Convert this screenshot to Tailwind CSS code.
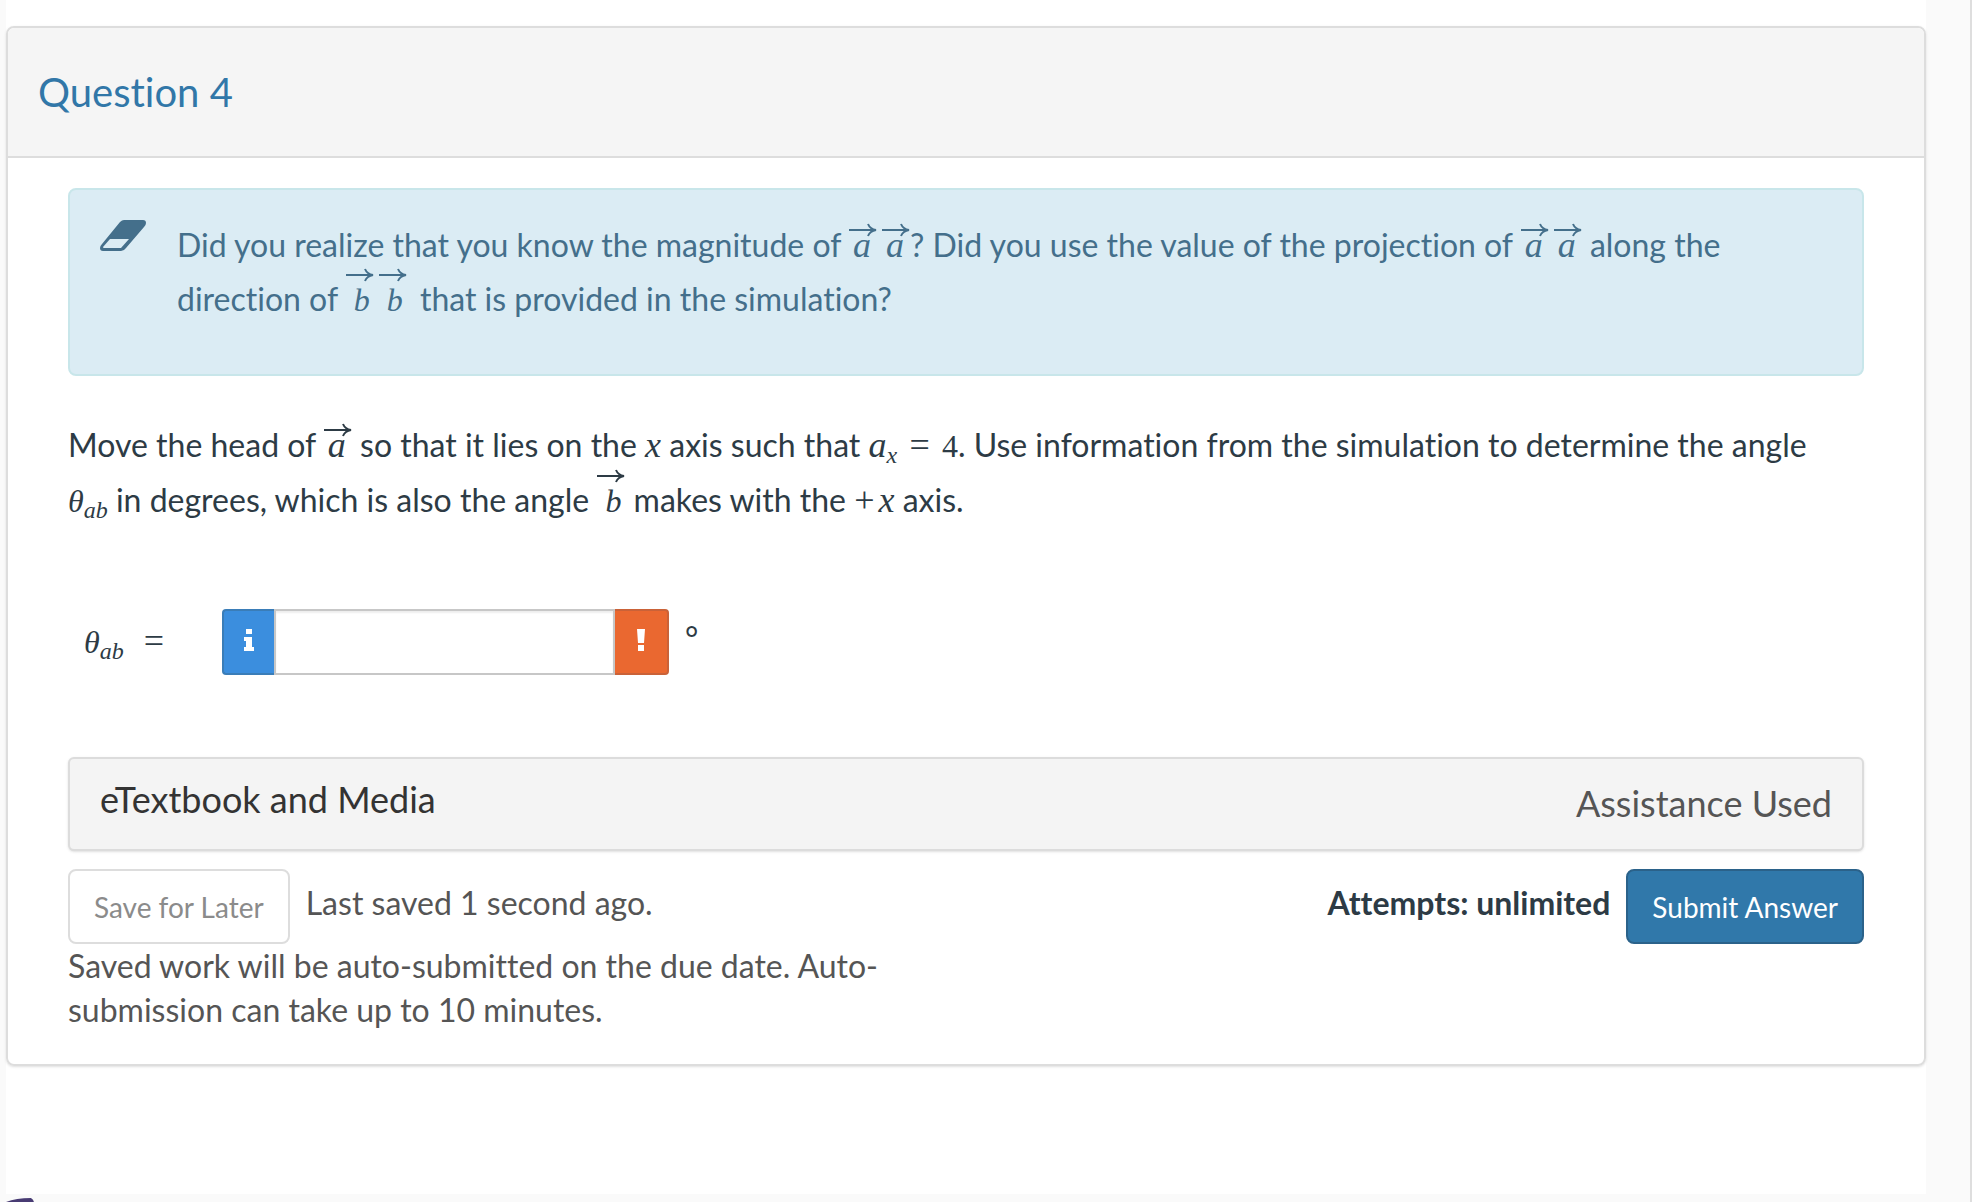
<!DOCTYPE html>
<html lang="en">
<head>
  <meta charset="UTF-8">
  <title>Question 4</title>
  <script src="https://cdn.jsdelivr.net/npm/@tailwindcss/browser@4"></script>
</head>
<body class="bg-[#fafafa] font-['Lato',sans-serif] text-[32px] text-[#2d3b45] [font-variant-ligatures:none]">
  <!-- arrow drawn over vector names -->
  <svg class="hidden">
    <symbol id="arrow" viewBox="0 0 28 14">
      <path d="M0 7H26M19 1Q21 6 27 7Q21 8 19 13" fill="none" stroke="currentColor" stroke-width="2"/>
    </symbol>
  </svg>

  <div class="flex flex-col min-h-screen pl-1.5 pr-11 border-r-2 border-[#dedede]">
    <main class="flex-1 bg-white pt-[26px]">
      <section class="border-2 border-[#dddddd] rounded-lg shadow-sm">
        <header class="flex items-center h-[130px] px-[30px] bg-[#f5f5f5] border-b-2 border-[#dddddd] rounded-t-md">
          <h1 class="text-[40px] leading-[44px] text-[#3177a8]">Question 4</h1>
        </header>

        <div class="px-[60px] pt-[30px] pb-8">
          <div class="flex items-start h-[188px] pl-[29px] pr-[120px] pt-[28px] bg-[#dbecf4] border-2 border-[#c8e6ea] rounded-lg text-[#446f8b]">
            <svg class="w-[48px] h-[34px] shrink-0 mr-[30px]" viewBox="0 0 48 34">
              <path fill="currentColor" fill-rule="evenodd" d="M25 2H44Q47 2 47 5Q47 7 45 9L27 30Q25 33 22 33H4Q1 33 1 30Q1 28 3 26L21 4Q23 2 25 2ZM11 21L4 29Q4 30 5 30H22L30 21Z"/>
            </svg>
            <p class="leading-[54px]">Did you realize that you know the magnitude of
              <span class="font-['Liberation_Serif',serif] italic text-4xl leading-none whitespace-nowrap"><span class="relative inline-block w-[33px] pl-1">a<svg class="absolute left-0 -top-1 w-7 h-3.5"><use href="#arrow"/></svg></span><span class="relative inline-block w-7 pl-1">a<svg class="absolute left-0 -top-1 w-7 h-3.5"><use href="#arrow"/></svg></span></span>? Did you use the value of the projection of
              <span class="font-['Liberation_Serif',serif] italic text-4xl leading-none whitespace-nowrap"><span class="relative inline-block w-[33px] pl-1">a<svg class="absolute left-0 -top-1 w-7 h-3.5"><use href="#arrow"/></svg></span><span class="relative inline-block w-7 pl-1">a<svg class="absolute left-0 -top-1 w-7 h-3.5"><use href="#arrow"/></svg></span></span>
              along the direction of
              <span class="font-['Liberation_Serif',serif] italic leading-none whitespace-nowrap"><span class="relative inline-block w-[33px] pl-2">b<svg class="absolute left-0 -top-4 w-7 h-3.5"><use href="#arrow"/></svg></span><span class="relative inline-block w-[33px] pl-2">b<svg class="absolute left-0 -top-4 w-7 h-3.5"><use href="#arrow"/></svg></span></span>
              that is provided in the simulation?</p>
          </div>

          <p class="mt-[42px] pr-4 leading-[54px]">Move the head of
            <span class="relative inline-block w-7 pl-1 font-['Liberation_Serif',serif] italic text-4xl leading-none">a<svg class="absolute left-0 -top-1 w-7 h-3.5"><use href="#arrow"/></svg></span>
            so that it lies on the <i class="font-['Liberation_Serif',serif] text-4xl leading-none">x</i> axis such that
            <i class="font-['Liberation_Serif',serif] text-4xl leading-none">a<sub class="text-2xl leading-none">x</sub></i>
            <span class="font-['Liberation_Serif',serif] text-4xl leading-none mx-1">=</span>
            <span class="font-['Liberation_Serif',serif]">4</span>. Use information from the simulation to determine the angle
            <i class="font-['Liberation_Serif',serif]">θ<sub class="text-2xl leading-none">ab</sub></i>
            in degrees, which is also the angle
            <span class="relative inline-block w-7 pl-2 font-['Liberation_Serif',serif] italic leading-none">b<svg class="absolute left-0 -top-4 w-7 h-3.5"><use href="#arrow"/></svg></span>
            makes with the <span class="font-['Liberation_Serif',serif] text-4xl leading-none">+<i class="ml-1">x</i></span> axis.</p>

          <div class="flex items-center mt-[81px] pl-4">
            <label for="theta" class="w-[138px] font-['Liberation_Serif',serif] leading-[48px]"><i>θ<sub class="text-2xl leading-none">ab</sub></i> <span class="ml-3 text-4xl leading-none">=</span></label>
            <div class="flex h-[66px]">
              <button type="button" aria-label="Information" class="flex items-center justify-center w-[52px] pb-1 bg-[#3b8ede] border-2 border-r-0 border-[#3a7db8] rounded-l">
                <svg class="w-3 h-6" viewBox="0 0 12 24" fill="#fff"><path d="M3 1H9V6H3ZM1 9H9V19H11V23H1V19H3V13H1Z"/></svg>
              </button>
              <input id="theta" type="text" class="w-[341px] px-4 border-2 border-[#c7c7c7] shadow-[inset_0_2px_2px_rgba(0,0,0,0.07)] outline-none">
              <button type="button" aria-label="Error" class="flex items-center justify-center w-[54px] pb-1 bg-[#ea6830] border-2 border-l-0 border-[#ca6238] rounded-r">
                <svg class="w-3 h-6" viewBox="0 0 12 24" fill="#fff"><path d="M2 1H10L9 15H3ZM3 17H9V23H3Z"/></svg>
              </button>
            </div>
            <span class="ml-4 pb-2">°</span>
          </div>

          <div class="flex items-start justify-between mt-[82px] h-[94px] px-[30px] bg-[#f4f4f4] border-2 border-[#dcdcdc] rounded-md shadow-sm text-4xl">
            <a href="#" class="mt-5 text-[#333333]">eTextbook and Media</a>
            <span class="mt-6 text-[#555555]">Assistance Used</span>
          </div>

          <div class="flex items-start justify-between mt-[18px]">
            <div class="w-[840px] leading-[44px] text-[#555555]">
              <div class="flex items-start gap-4">
                <button type="button" class="h-[75px] px-6 border-2 border-[#dddddd] rounded-lg bg-white text-[28px] text-[#8b8b8b]">Save for Later</button>
                <span class="mt-3">Last saved 1 second ago.</span>
              </div>
              <p>Saved work will be auto-submitted on the due date. Auto-submission can take up to 10 minutes.</p>
            </div>
            <div class="flex items-start gap-4">
              <strong class="mt-3 leading-[44px] font-bold">Attempts: unlimited</strong>
              <button type="button" class="h-[75px] px-6 border-2 border-[#2b628a] rounded-lg bg-[#3078aa] text-[28px] text-white">Submit Answer</button>
            </div>
          </div>
        </div>
      </section>
    </main>
    <footer class="h-2 overflow-hidden">
      <svg class="w-7 h-8 mt-1" viewBox="0 0 28 32"><path d="M0 4Q10 0 25 0Q28 2 28 5V32H0Z" fill="#483b73"/></svg>
    </footer>
  </div>
</body>
</html>
